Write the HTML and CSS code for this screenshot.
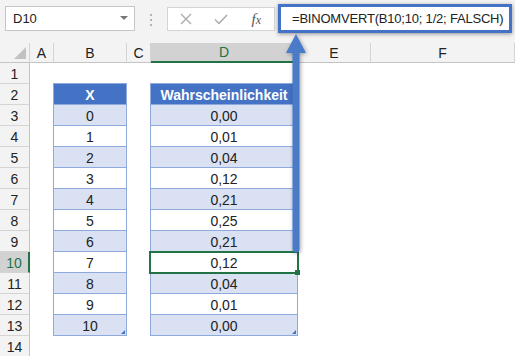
FILE: index.html
```html
<!DOCTYPE html>
<html lang="de">
<head>
    <meta charset="UTF-8">
    <meta name="viewport" content="width=device-width, initial-scale=1.0">
    <title>BINOMVERT</title>
    <link rel="stylesheet" href="styles.css">
</head>
<body>
    <div class="topbar">
        <div class="namebox">D10</div>
        <div class="grip"><span></span><span></span><span></span></div>
        <div class="fxbar">
            <span class="btn">
                <svg width="12" height="12" viewBox="0 0 12 12"><path d="M1 1 L11 11 M11 1 L1 11" stroke="#a9a9a9" stroke-width="1.3" fill="none"/></svg>
            </span>
            <span class="btn">
                <svg width="14" height="11" viewBox="0 0 14 11"><path d="M1 5.5 L5 9.5 L13 1" stroke="#a9a9a9" stroke-width="1.4" fill="none"/></svg>
            </span>
            <span class="btn fx"><i>f</i><i class="sub">x</i></span>
        </div>
        <div class="formula">=BINOMVERT(B10;10; 1/2; FALSCH)</div>
    </div>

    <div class="sheet">
        <div class="corner"></div>
        <div class="ch">A</div><div class="ch">B</div><div class="ch">C</div>
        <div class="ch sel">D</div><div class="ch">E</div><div class="ch">F</div>

        <div class="rh">1</div>
        <div class="c"></div><div class="c"></div><div class="c"></div><div class="c"></div><div class="c"></div><div class="c"></div>

        <div class="rh">2</div>
        <div class="c"></div><div class="th">X</div><div class="c"></div><div class="th">Wahrscheinlichkeit</div><div class="c"></div><div class="c"></div>

        <div class="rh">3</div>
        <div class="c"></div><div class="t alt">0</div><div class="c"></div><div class="t alt">0,00</div><div class="c"></div><div class="c"></div>

        <div class="rh">4</div>
        <div class="c"></div><div class="t">1</div><div class="c"></div><div class="t">0,01</div><div class="c"></div><div class="c"></div>

        <div class="rh">5</div>
        <div class="c"></div><div class="t alt">2</div><div class="c"></div><div class="t alt">0,04</div><div class="c"></div><div class="c"></div>

        <div class="rh">6</div>
        <div class="c"></div><div class="t">3</div><div class="c"></div><div class="t">0,12</div><div class="c"></div><div class="c"></div>

        <div class="rh">7</div>
        <div class="c"></div><div class="t alt">4</div><div class="c"></div><div class="t alt">0,21</div><div class="c"></div><div class="c"></div>

        <div class="rh">8</div>
        <div class="c"></div><div class="t">5</div><div class="c"></div><div class="t">0,25</div><div class="c"></div><div class="c"></div>

        <div class="rh">9</div>
        <div class="c"></div><div class="t alt">6</div><div class="c"></div><div class="t alt">0,21</div><div class="c"></div><div class="c"></div>

        <div class="rh sel">10</div>
        <div class="c"></div><div class="t">7</div><div class="c"></div><div class="t sel">0,12</div><div class="c"></div><div class="c"></div>

        <div class="rh">11</div>
        <div class="c"></div><div class="t alt">8</div><div class="c"></div><div class="t alt">0,04</div><div class="c"></div><div class="c"></div>

        <div class="rh">12</div>
        <div class="c"></div><div class="t">9</div><div class="c"></div><div class="t">0,01</div><div class="c"></div><div class="c"></div>

        <div class="rh">13</div>
        <div class="c"></div><div class="t alt end">10</div><div class="c"></div><div class="t alt end">0,00</div><div class="c"></div><div class="c"></div>

        <div class="rh">14</div>
        <div class="c"></div><div class="c"></div><div class="c"></div><div class="c"></div><div class="c"></div><div class="c"></div>
    </div>

    <!-- callout arrow pointing at the formula -->
    <svg class="arrow" width="26" height="228" viewBox="0 0 26 228">
        <path d="M13 4 L23 23 L16.5 23 L16.5 219 A3.5 3.5 0 0 1 9.5 219 L9.5 23 L3 23 Z" fill="#4a7bc9"/>
    </svg>
</body>
</html>
```

FILE: styles.css
```css
body {
    margin: 0;
    width: 515px;
    height: 356px;
    overflow: hidden;
    position: relative;
    background: #fff;
    font-family: "Liberation Sans", Arial, sans-serif;
    color: #222;
}

/* formula bar */
.topbar {
    display: flex;
    align-items: flex-start;
    height: 43px;
    box-sizing: border-box;
    padding: 6px 0 0 5px;
    background: #f3f3f3;
}
.namebox {
    position: relative;
    box-sizing: border-box;
    width: 130px;
    height: 25px;
    border: 1px solid #c6c6c6;
    background: #fff;
    padding-left: 7px;
    font-size: 13px;
    line-height: 23px;
}
.namebox::after {
    content: "";
    position: absolute;
    right: 6px;
    top: 9px;
    border-left: 4px solid transparent;
    border-right: 4px solid transparent;
    border-top: 4px solid #777;
}
.grip {
    width: 32px;
    display: flex;
    flex-direction: column;
    align-items: center;
    gap: 3px;
    padding-top: 8px;
}
.grip span {
    width: 2px;
    height: 2px;
    background: #b5b5b5;
}
.fxbar {
    box-sizing: border-box;
    width: 108px;
    height: 24px;
    margin-top: 1px;
    border: 1px solid #d4d4d4;
    background: #fff;
    display: flex;
    align-items: center;
}
.btn {
    width: 36px;
    display: flex;
    justify-content: center;
    align-items: center;
}
.fx {
    font-family: "Liberation Serif", serif;
    font-size: 15px;
    color: #555;
}
.fx .sub {
    font-size: 12px;
    margin-top: 3px;
}
.formula {
    position: relative;
    z-index: 2;
    box-sizing: border-box;
    width: 234px;
    height: 29px;
    margin: -2px 0 0 3px;
    border: 3px solid #4472c4;
    background: #fff;
    padding-left: 11px;
    font-size: 13px;
    line-height: 23px;
    letter-spacing: -0.2px;
    box-shadow: 0 1px 4px rgba(0, 0, 0, 0.4);
}

/* worksheet */
.sheet {
    display: grid;
    grid-template-columns: 30px 24px 73px 24px 147px 73px 1fr;
    grid-template-rows: 20px repeat(14, 21px);
    font-size: 14px;
}
.sheet > div {
    box-sizing: border-box;
    display: flex;
    align-items: center;
    justify-content: center;
}
.corner {
    position: relative;
    background: #f3f3f3;
    border-right: 1px solid #d4d4d4;
    border-bottom: 1px solid #c4c4c4;
}
.corner::after {
    content: "";
    position: absolute;
    right: 3px;
    bottom: 3px;
    border-left: 12px solid transparent;
    border-bottom: 12px solid #c2c2c2;
}
.ch {
    background: #f3f3f3;
    border-right: 1px solid #d4d4d4;
    border-bottom: 1px solid #c4c4c4;
}
.ch.sel {
    background: #d2d2d2;
    color: #217346;
    border-bottom: 2px solid #217346;
}
.rh {
    background: #f3f3f3;
    border-right: 1px solid #c4c4c4;
    border-bottom: 1px solid #d4d4d4;
    padding-top: 1px;
}
.rh.sel {
    background: #d2d2d2;
    color: #217346;
    border-right: 2px solid #217346;
}
.c {
    background: #fff;
}

/* table */
.th {
    margin: -1px 0 0 -1px;
    border: 1px solid #8ea9db;
    background: #4472c4;
    color: #fff;
    font-weight: bold;
    padding-top: 2px;
}
.t {
    position: relative;
    margin-left: -1px;
    border-left: 1px solid #8ea9db;
    border-right: 1px solid #8ea9db;
    border-bottom: 1px solid #8ea9db;
    background: #fff;
    padding-top: 2px;
}
.t.alt {
    background: #d9e1f2;
}
.t.end::after {
    content: "";
    position: absolute;
    right: 1px;
    bottom: 1px;
    border-left: 4px solid transparent;
    border-bottom: 4px solid #4472c4;
}
.t.sel {
    z-index: 1;
    outline: 2px solid #217346;
    outline-offset: -1px;
}
.t.sel::after {
    content: "";
    position: absolute;
    right: -3px;
    bottom: -3px;
    width: 5px;
    height: 5px;
    background: #217346;
}

.arrow {
    position: absolute;
    left: 283px;
    top: 30px;
    z-index: 3;
    filter: drop-shadow(1px 1px 2px rgba(0, 0, 0, 0.35));
}
```
